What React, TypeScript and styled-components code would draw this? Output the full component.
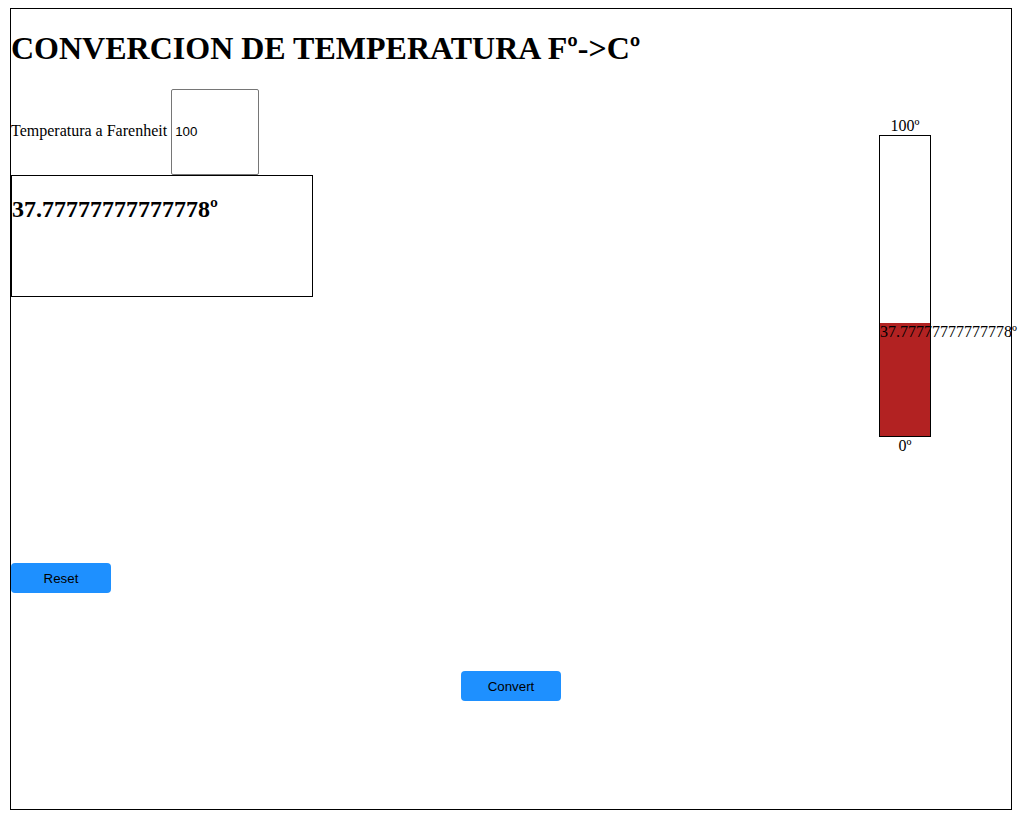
import React, { useState } from "react";
import styled, { createGlobalStyle } from "styled-components";

const GlobalStyle = createGlobalStyle`
  html, body {
    margin: 0;
    padding: 0;
    background: #ffffff;
  }
  body {
    padding: 8px 0 0 10px;
    font-family: "Liberation Serif", "Times New Roman", serif;
    color: #000000;
  }
`;

const Frame = styled.div`
  box-sizing: content-box;
  width: 1000px;
  height: 800px;
  border: 1px solid #000000;
  display: flex;
  flex-direction: column;
  font-family: "Liberation Serif", "Times New Roman", serif;
`;

const Title = styled.h1`
  margin: 21.44px 0;
  font-size: 32px;
  font-weight: bold;
  line-height: normal;
`;

const MainRow = styled.div`
  display: flex;
  justify-content: space-between;
  align-items: flex-start;
`;

const LeftColumn = styled.div`
  display: flex;
  flex-direction: column;
  align-items: flex-start;
`;

const InputRow = styled.div`
  display: flex;
  align-items: baseline;
  gap: 4px;
`;

const Label = styled.label`
  font-size: 16px;
  line-height: normal;
`;

const TempInput = styled.input`
  box-sizing: border-box;
  width: 88px;
  height: 86px;
  margin: 0;
  padding: 1px 3px;
  border: 1px solid #767676;
  border-radius: 2px;
  font-family: "Liberation Sans", Arial, sans-serif;
  font-size: 13.333px;
  color: #000000;
  background: #ffffff;
`;

const ResultBox = styled.div`
  box-sizing: content-box;
  width: 300px;
  height: 120px;
  border: 1px solid #000000;
`;

const ResultValue = styled.h2`
  margin: 19.92px 0;
  font-size: 24px;
  font-weight: bold;
  line-height: normal;
`;

const ThermoColumn = styled.div`
  display: flex;
  flex-direction: column;
  align-items: center;
  margin-top: 28.5px;
  margin-right: 80px;
`;

const ThermoLabel = styled.span`
  font-size: 16px;
  line-height: normal;
`;

const Tube = styled.div`
  box-sizing: content-box;
  width: 50px;
  height: 300px;
  border: 1px solid #000000;
  background: #ffffff;
  display: flex;
  flex-direction: column;
  justify-content: flex-end;
`;

const Fill = styled.div`
  position: relative;
  width: 100%;
  background: #b22222;
`;

const FillLabel = styled.span`
  position: absolute;
  top: 0;
  left: 0;
  font-size: 16px;
  line-height: normal;
  white-space: nowrap;
`;

const ActionButton = styled.button<{ $offset: number; $center?: boolean }>`
  box-sizing: border-box;
  width: 100px;
  height: 30px;
  margin-top: ${(p) => p.$offset}px;
  align-self: ${(p) => (p.$center ? "center" : "flex-start")};
  border: none;
  border-radius: 4px;
  background: #1e90ff;
  color: #000000;
  font-family: "Liberation Sans", Arial, sans-serif;
  font-size: 13.333px;
  cursor: pointer;
`;

const toCelsius = (f: string): number | null => {
  const n = parseFloat(f);
  if (Number.isNaN(n)) return null;
  return ((n - 32) * 5) / 9;
};

export default function App() {
  const [fahrenheit, setFahrenheit] = useState<string>("100");
  const [celsius, setCelsius] = useState<number | null>(toCelsius("100"));

  const pct = celsius === null ? 0 : Math.max(0, Math.min(100, celsius));

  return (
    <>
      <GlobalStyle />
      <Frame>
        <Title>CONVERCION DE TEMPERATURA Fº-&gt;Cº</Title>
        <MainRow>
          <LeftColumn>
            <InputRow>
              <Label htmlFor="far">Temperatura a Farenheit</Label>
              <TempInput
                id="far"
                type="text"
                value={fahrenheit}
                onChange={(e) => setFahrenheit(e.target.value)}
              />
            </InputRow>
            <ResultBox>
              <ResultValue>{celsius === null ? "" : `${celsius}º`}</ResultValue>
            </ResultBox>
          </LeftColumn>
          <ThermoColumn>
            <ThermoLabel>100º</ThermoLabel>
            <Tube>
              <Fill style={{ height: `${pct}%` }}>
                {celsius !== null && <FillLabel>{`${celsius}º`}</FillLabel>}
              </Fill>
            </Tube>
            <ThermoLabel>0º</ThermoLabel>
          </ThermoColumn>
        </MainRow>
        <ActionButton
          $offset={108}
          onClick={() => {
            setFahrenheit("");
            setCelsius(null);
          }}
        >
          Reset
        </ActionButton>
        <ActionButton $offset={78} $center onClick={() => setCelsius(toCelsius(fahrenheit))}>
          Convert
        </ActionButton>
      </Frame>
    </>
  );
}
